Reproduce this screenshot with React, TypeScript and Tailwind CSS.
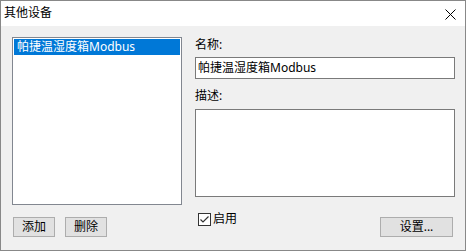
import React from "react";

export default function App() {
  const font = "font-['Noto_Sans','Noto_Sans_CJK_SC',sans-serif]";
  return (
    <div className={`w-[466px] h-[251px] border border-[#888888] flex flex-col text-[12px] leading-[16px] text-black ${font}`}>
      <div className="h-[25px] bg-white flex items-center justify-between pl-[3px] pr-[9px]">
        <span className="mt-[-1px]">其他设备</span>
        <svg width="11" height="11" viewBox="0 0 11 11" className="mt-[2px]">
          <path d="M0.5 0.5 L10.5 10.5 M10.5 0.5 L0.5 10.5" stroke="#000" strokeWidth="1" fill="none" />
        </svg>
      </div>
      <div className="flex-1 bg-[#f0f0f0] flex pl-[11px] pt-[11px]">
        <div className="w-[170px] flex flex-col">
          <div className="h-[168px] bg-white border border-[#828790] p-[1px]">
            <div className="h-[16px] bg-[#0078d7] text-white pl-[3px] leading-[16px]">帕捷温湿度箱Modbus</div>
          </div>
          <div className="flex gap-[10px] mt-[12px] ml-[1px]">
            <button className="w-[42px] h-[20px] bg-[#e1e1e1] border border-[#adadad] flex items-center justify-center">添加</button>
            <button className="w-[42px] h-[20px] bg-[#e1e1e1] border border-[#adadad] flex items-center justify-center">删除</button>
          </div>
        </div>
        <div className="w-[260px] ml-[13px] flex flex-col">
          <div className="h-[16px]">名称:</div>
          <div className="mt-[4px] h-[22px] bg-white border border-[#7a7a7a] flex items-center pl-[2px]">帕捷温湿度箱Modbus</div>
          <div className="mt-[9px] h-[16px]">描述:</div>
          <div className="mt-[5px] h-[88px] bg-white border border-[#7a7a7a]"></div>
          <div className="flex items-start">
            <label className="mt-[14px] ml-[3px] flex items-center gap-[2px]">
              <span className="w-[13px] h-[13px] border border-[#333333] bg-white flex items-center justify-center">
                <svg width="11" height="11" viewBox="0 0 11 11">
                  <path d="M1.5 5.5 L4 8 L9.5 2.5" stroke="#333" strokeWidth="1.2" fill="none" />
                </svg>
              </span>
              <span>启用</span>
            </label>
            <button className="ml-auto mr-[2px] mt-[20px] w-[73px] h-[20px] bg-[#e1e1e1] border border-[#adadad] flex items-center justify-center">设置...</button>
          </div>
        </div>
      </div>
    </div>
  );
}
